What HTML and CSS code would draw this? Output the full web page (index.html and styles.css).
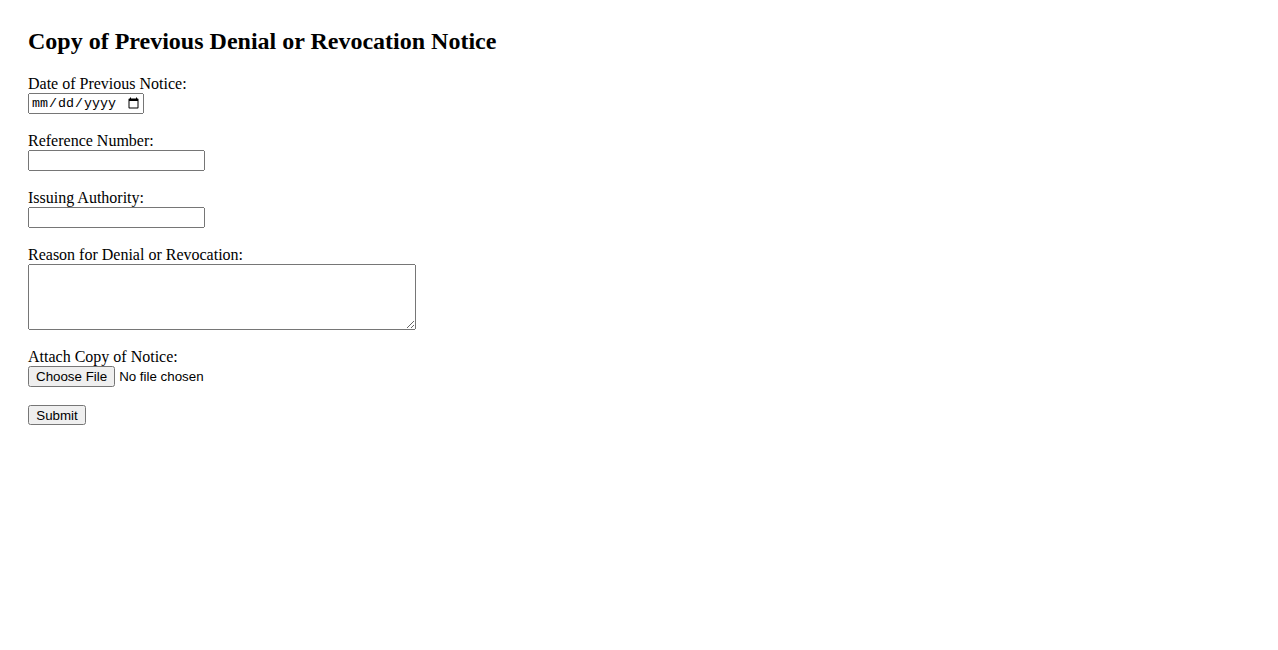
FILE: index.html
```html
<!DOCTYPE html>
<html lang="en">
<head>
<meta charset="utf-8">
<title>Copy of Previous Denial or Revocation Notice</title>
<link rel="stylesheet" href="styles.css">
</head>
<body>
<div class="page">
  <h2 class="title">Copy of Previous Denial or Revocation Notice</h2>
  <form class="notice-form" onsubmit="return false;">
    <label for="date">Date of Previous Notice:</label><br>
    <input class="field-date" type="date" id="date" name="date"><br><br>
    <label for="ref">Reference Number:</label><br>
    <input class="field-text" type="text" id="ref" name="ref"><br><br>
    <label for="auth">Issuing Authority:</label><br>
    <input class="field-text" type="text" id="auth" name="auth"><br><br>
    <label for="reason">Reason for Denial or Revocation:</label><br>
    <textarea class="field-area" id="reason" name="reason"></textarea><br><br>
    <label for="file">Attach Copy of Notice:</label><br>
    <input class="field-file" type="file" id="file" name="file"><br><br>
    <input class="btn-submit" type="submit" value="Submit">
  </form>
</div>
</body>
</html>
```
FILE: styles.css
```css
html, body {
  background: #ffffff;
}
body {
  margin: 8px;
  font-family: "Liberation Serif", "Times New Roman", serif;
  font-size: 16px;
  color: #000000;
}
.page {
  padding: 20px;
}
.title {
  margin: 0 0 19.92px 0;
  font-size: 24px;
  font-weight: bold;
}
.notice-form input,
.notice-form textarea {
  font-family: "Liberation Sans", Arial, sans-serif;
  font-size: 13.333px;
}
.notice-form .field-date {
  font-family: "Liberation Mono", "Courier New", monospace;
  width: 116px;
  height: 21px;
  box-sizing: border-box;
}
.field-text {
  width: 177px;
  height: 21px;
  box-sizing: border-box;
}
.notice-form .field-area {
  width: 388px;
  height: 66px;
  box-sizing: border-box;
  vertical-align: top;
  font-family: "Liberation Mono", "Courier New", monospace;
}
.notice-form .btn-submit {
  width: 58px;
  height: 20px;
  box-sizing: border-box;
}
```
